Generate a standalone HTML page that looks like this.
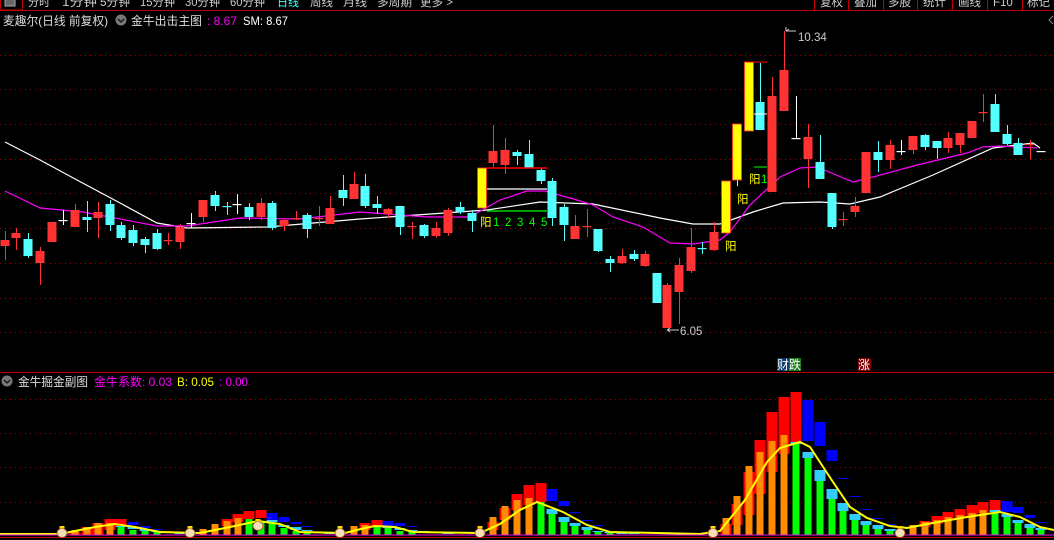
<!DOCTYPE html>
<html><head><meta charset="utf-8">
<style>
html,body{margin:0;padding:0;background:#000;width:1054px;height:540px;overflow:hidden;}
svg{display:block}
text{font-family:"Liberation Sans","Noto Sans CJK SC",sans-serif;}
</style></head>
<body>
<svg id="s" width="1054" height="540" viewBox="0 0 1054 540" xmlns="http://www.w3.org/2000/svg">
<rect width="1054" height="540" fill="#000"/>
<rect x="0" y="0" width="1054" height="10" fill="#000"/>
<line x1="0" y1="10.5" x2="1054" y2="10.5" stroke="#c00000" stroke-width="1"/>
<rect x="0.5" y="-2" width="22" height="12" fill="none" stroke="#c00000"/>
<rect x="5" y="-2" width="10" height="8" fill="#666" stroke="#aaa"/>
<g font-size="11.5" fill="#ccc">
<text x="28" y="6" textLength="22" lengthAdjust="spacingAndGlyphs">分时</text>
<text x="62" y="6" textLength="35" lengthAdjust="spacingAndGlyphs">1分钟</text>
<text x="100" y="6" textLength="30" lengthAdjust="spacingAndGlyphs">5分钟</text>
<text x="140" y="6" textLength="35" lengthAdjust="spacingAndGlyphs">15分钟</text>
<text x="185" y="6" textLength="35" lengthAdjust="spacingAndGlyphs">30分钟</text>
<text x="230" y="6" textLength="35" lengthAdjust="spacingAndGlyphs">60分钟</text>
<text x="277" y="6" fill="#4ff" textLength="22" lengthAdjust="spacingAndGlyphs">日线</text>
<text x="310" y="6" textLength="23" lengthAdjust="spacingAndGlyphs">周线</text>
<text x="343" y="6" textLength="24" lengthAdjust="spacingAndGlyphs">月线</text>
<text x="377" y="6" textLength="35" lengthAdjust="spacingAndGlyphs">多周期</text>
<text x="420" y="6" textLength="33" lengthAdjust="spacingAndGlyphs">更多 &gt;</text>
<text x="820" y="6">复权</text><text x="854" y="6">叠加</text><text x="888" y="6">多股</text><text x="923" y="6">统计</text><text x="958" y="6">画线</text><text x="993" y="6">F10</text><text x="1027" y="6">标记</text>
</g>
<g stroke="#c00000"><line x1="814.5" y1="0" x2="814.5" y2="10"/><line x1="848.5" y1="0" x2="848.5" y2="10"/><line x1="883.5" y1="0" x2="883.5" y2="10"/><line x1="917.5" y1="0" x2="917.5" y2="10"/><line x1="952.5" y1="0" x2="952.5" y2="10"/><line x1="987.5" y1="0" x2="987.5" y2="10"/><line x1="1022.5" y1="0" x2="1022.5" y2="10"/></g>
<g font-size="12">
<text x="3" y="25" fill="#ddd" textLength="105" lengthAdjust="spacingAndGlyphs">麦趣尔(日线 前复权)</text>
<circle cx="121" cy="20" r="5.5" fill="#777"/><path d="M118,19 l3,3 l3,-3" stroke="#111" fill="none" stroke-width="1.3"/>
<text x="131" y="25" fill="#ddd" textLength="71" lengthAdjust="spacingAndGlyphs">金牛出击主图</text>
<text x="207" y="25" fill="#f0f" textLength="30" lengthAdjust="spacingAndGlyphs">: 8.67</text>
<text x="243" y="25" fill="#fff" textLength="45" lengthAdjust="spacingAndGlyphs">SM: 8.67</text>
</g>
<path d="M1053,16 l-4,4 l4,4" stroke="#888" fill="none"/>
<g id="grid"></g>
<g id="ma"></g>
<g id="cand"></g>
<line x1="487" y1="168" x2="547" y2="168" stroke="#f00" stroke-width="1.5"/>
<line x1="487" y1="189" x2="547" y2="189" stroke="#fff" stroke-width="1.2"/>
<line x1="487" y1="211" x2="547" y2="211" stroke="#0f0" stroke-width="1.2"/>
<line x1="746" y1="62" x2="767" y2="62" stroke="#f00" stroke-width="1"/>
<line x1="754" y1="114" x2="767" y2="114" stroke="#fff" stroke-width="1"/>
<line x1="754" y1="167" x2="767" y2="167" stroke="#0f0" stroke-width="1"/>
<g font-size="11.5">
<text x="480" y="226" fill="#ff0">阳</text>
<text x="493" y="226" fill="#0f0">1</text><text x="505" y="226" fill="#0f0">2</text><text x="517" y="226" fill="#0f0">3</text><text x="529" y="226" fill="#0f0">4</text><text x="541" y="226" fill="#0f0">5</text>
<text x="749" y="183" fill="#ff0">阳</text><text x="761" y="183" fill="#0f0">1</text>
<text x="737" y="203" fill="#ff0">阳</text>
<text x="725" y="250" fill="#ff0">阳</text>
</g>
<g font-size="11.5" fill="#ccc">
<path d="M786,31 h10 M786,31 l3,-2 M786,31 l0,-4" stroke="#ccc" fill="none"/>
<text x="798" y="41">10.34</text>
<path d="M667,330 h12 M667,330 l3,-2 M667,330 l3,2" stroke="#ccc" fill="none"/>
<text x="680" y="335">6.05</text>
</g>
<line x1="0" y1="372.5" x2="1054" y2="372.5" stroke="#c00000"/>
<rect x="777" y="358" width="12" height="13" fill="#0a3a6a"/><rect x="789" y="358" width="12" height="13" fill="#1a7a1a"/>
<text x="777" y="369" font-size="12" fill="#fff">财跌</text>
<rect x="858" y="358" width="13" height="13" fill="#7a0000"/>
<text x="858" y="369" font-size="12" fill="#fff">涨</text>
<circle cx="7" cy="381" r="5.5" fill="#777"/><path d="M4,380 l3,3 l3,-3" stroke="#111" fill="none" stroke-width="1.3"/>
<g font-size="12">
<text x="18" y="386" fill="#ddd" textLength="70" lengthAdjust="spacingAndGlyphs">金牛掘金副图</text>
<text x="94" y="386" fill="#f0f" textLength="78" lengthAdjust="spacingAndGlyphs">金牛系数: 0.03</text>
<text x="177" y="386" fill="#ff0" textLength="37" lengthAdjust="spacingAndGlyphs">B: 0.05</text>
<text x="219" y="386" fill="#f0f" textLength="29" lengthAdjust="spacingAndGlyphs">: 0.00</text>
</g>
<g id="sub"></g>
<line x1="0" y1="535" x2="1054" y2="535" stroke="#e0e" stroke-width="1"/>
<line x1="0" y1="537.5" x2="1054" y2="537.5" stroke="#c00000" stroke-width="1"/>
<g id="bags"></g>
</svg>
<script>
var NS="http://www.w3.org/2000/svg";
function add(g,tag,a){var e=document.createElementNS(NS,tag);for(var k in a)e.setAttribute(k,a[k]);document.getElementById(g).appendChild(e);return e;}
[55,89,124,159,193,228,263,298,332,399,433,467,502].forEach(function(y){add('grid','line',{x1:0,x2:1054,y1:y+0.5,y2:y+0.5,stroke:'#a00000','stroke-dasharray':'1,4'});});
function pl(pts,c,w){add('ma','polyline',{points:pts.map(function(p){return p.join(',')}).join(' '),fill:'none',stroke:c,'stroke-width':w});}
pl([[5,142],[40,160],[77,180],[120,203],[157,223],[187,228],[267,227],[360,219],[487,210],[540,202],[593,204],[660,218],[693,224],[720,224],[753,212],[783,203],[820,202],[850,204],[880,197],[933,175],[993,148],[1033,143],[1040,148]],'#fff',1.2);
pl([[5,191],[40,208],[83,212],[157,226],[187,226],[240,218],[300,219],[360,212],[427,217],[470,217],[500,200],[527,191],[545,191],[577,200],[593,205],[613,217],[643,227],[670,243],[693,244],[720,240],[730,232],[750,205],[780,177],[800,168],[817,167],[853,182],[873,177],[917,165],[967,153],[983,147],[1000,146],[1037,148]],'#f0f',1.2);
var C=[[5,'r',240,246,231,260],[16,'r',233,238,228,250],[28,'c',239,256,233,258],[40,'r',251,263,247,285],[52,'r',222,242,222,242],[63,'w',220,220,210,225],[75,'r',210,227,204,227],[87,'c',217,220,201,232],[98,'r',212,218,202,238],[110,'c',204,225,200,231],[121,'c',225,238,222,240],[133,'c',230,243,225,246],[145,'c',239,245,237,253],[157,'c',233,249,229,250],[168,'r',240,241,233,245],[180,'r',227,242,224,249],[191,'w',223,223,213,228],[203,'r',200,217,200,222],[215,'c',195,206,191,211],[227,'c',206,206,202,215],[237,'w',204,204,194,214],[249,'c',207,217,203,220],[261,'r',203,217,198,220],[272,'c',203,228,201,230],[284,'r',220,226,219,231],[296,'r',218,219,211,220],[307,'c',215,229,213,238],[319,'r',218,219,206,226],[330,'r',208,224,196,224],[343,'c',190,198,175,206],[354,'r',184,199,172,199],[365,'c',186,206,174,208],[377,'c',204,208,196,214],[388,'r',209,214,208,218],[400,'c',206,227,206,235],[412,'r',226,227,222,239],[424,'c',225,236,224,238],[436,'r',228,236,222,238],[448,'r',210,233,208,236],[460,'c',207,212,202,214],[472,'c',213,221,210,232],[482,'y',168,208,168,208],[493,'r',151,163,125,167],[505,'r',150,165,138,174],[517,'c',152,156,150,165],[529,'c',154,168,140,168],[541,'c',170,181,168,184],[552,'c',181,218,178,226],[564,'c',207,225,204,241],[575,'r',226,239,215,239],[587,'r',226,227,209,237],[598,'c',229,251,229,252],[610,'c',259,263,256,272],[622,'r',256,263,249,264],[634,'c',254,259,250,261],[645,'r',254,266,251,267],[657,'c',273,303,273,303],[667,'r',285,328,283,328],[679,'r',265,292,258,324],[691,'r',247,271,228,273],[702,'c',248,248,242,254],[714,'r',232,250,222,251],[726,'y',181,233,181,233],[737,'y',124,180,124,186],[749,'y',62,131,62,131],[760,'c',102,130,63,130],[772,'r',96,192,77,192],[784,'r',70,111,31,111],[796,'w',138,138,96,138],[808,'r',137,159,124,188],[820,'c',162,179,135,179],[832,'c',193,227,193,229],[843,'r',219,220,212,226],[855,'r',206,212,197,217],[866,'r',152,193,152,193],[878,'c',152,160,141,172],[890,'r',145,160,140,169],[901,'w',151,151,140,155],[913,'r',136,150,136,154],[925,'c',135,147,134,150],[937,'c',141,148,141,159],[948,'r',138,148,132,153],[960,'r',133,145,133,153],[972,'r',121,138,121,138],[983,'r',112,113,94,122],[995,'c',104,132,94,132],[1007,'c',134,144,125,145],[1018,'c',143,155,138,155],[1030,'r',144,145,140,159],[1041,'w',151,151,151,151]];
var col={r:'#ff3333',c:'#54ffff',w:'#ffffff',y:'#ffff00'};
C.forEach(function(d){var x=d[0],c=col[d[1]];
 if(d[5]>d[4])add('cand','line',{x1:x+0.5,x2:x+0.5,y1:d[4],y2:d[5],stroke:c,'stroke-width':1});
 var h=Math.max(d[3]-d[2],1.2);
 add('cand','rect',{x:x-4.5,y:d[2],width:9,height:h,fill:c});
 if(d[1]=='y')add('cand','rect',{x:x-4.5,y:d[2],width:9,height:h,fill:'none',stroke:'#f33','stroke-width':0.8});
});
var B=[{x:75,r:[532,535],o:530},{x:87,r:[527,535],o:527},{x:98,r:[523,535],o:523},{x:110,r:[519,530],o:523},{x:121,r:[519,526],c:[526,527],g:527},{x:133,bl:[522,525],c:[527,529],g:530},{x:145,bl:[526,528],c:[529,531],g:531},{x:157,bl:[529,530],c:[531,532],g:532},{x:168,c:[532,533]},{x:180,c:[533,534]},
{x:203,o:529},{x:215,o:524},{x:227,r:[519,526],o:521},{x:238,r:[514,522],o:518},{x:249,r:[511,519],g:519},{x:261,r:[510,518],g:522},{x:272,bl:[513,520],c:[520,522],g:523},{x:284,bl:[517,522],c:[525,527],g:528},{x:296,bl:[522,524],c:[527,530],g:531},{x:307,bl:[526,527],c:[530,531],g:532},{x:319,c:[532,533]},{x:330,c:[533,534]},
{x:354,o:526},{x:365,r:[523,530],o:525},{x:377,r:[520,526],g:526},{x:388,bl:[521,526],c:[526,528],g:528},{x:400,bl:[523,526],c:[528,530],g:531},{x:412,bl:[526,527],c:[530,531],g:531},{x:424,c:[531,532]},{x:436,c:[532,533]},{x:448,c:[533,534]},
{x:493,r:[522,530],o:517},{x:505,r:[508,520],o:506},{x:517,r:[494,510],o:500},{x:529,r:[485,505],o:498},{x:541,r:[483,502],g:502},{x:552,bl:[489,501],c:[509,514],g:514},{x:564,bl:[501,506],c:[517,522],g:522},{x:575,bl:[512,513],c:[523,526],g:526},{x:587,bl:[520,521],c:[527,530],g:530},{x:598,bl:[525,526],c:[531,532],g:532},{x:610,c:[532,533],g:533},{x:622,c:[533,534]},{x:634,c:[533,534]},
{x:726,r:[524,535],o:518},{x:737,r:[504,525],o:496},{x:749,r:[472,515],o:466},{x:760,r:[440,494],o:452},{x:772,r:[412,472],o:441},{x:784,r:[397,454],o:435},{x:796,r:[392,443],c:[442,444],g:444},{x:808,bl:[400,441],c:[452,458],g:458},{x:820,bl:[422,446],c:[470,481],g:481},{x:832,bl:[450,461],c:[489,499],g:499},{x:843,bl:[478,479],c:[503,511],g:511},{x:855,bl:[496,497],c:[514,520],g:520},{x:866,bl:[509,510],c:[521,525],g:525},{x:878,bl:[518,519],c:[525,529],g:529},{x:890,bl:[524,525],c:[529,531],g:531},
{x:913,o:525},{x:925,r:[521,527],o:522},{x:937,r:[516,524],o:520},{x:948,r:[512,520],o:517},{x:960,r:[509,518],o:515},{x:972,r:[505,516],o:513},{x:983,r:[502,513],o:510},{x:995,r:[500,511],c:[510,512],g:511},{x:1007,bl:[501,512],c:[514,517],g:517},{x:1018,bl:[507,513],c:[520,523],g:523},{x:1030,bl:[515,518],c:[524,528],g:528},{x:1041,bl:[522,523],c:[528,530],g:530}];
B.forEach(function(b){var x=b.x;
 if(b.r)add('sub','rect',{x:x-5.5,y:b.r[0],width:11,height:b.r[1]-b.r[0],fill:'#ff0000'});
 if(b.bl)add('sub','rect',{x:x-5.5,y:b.bl[0],width:11,height:Math.max(b.bl[1]-b.bl[0],1),fill:'#0000ff'});
 if(b.o)add('sub','rect',{x:x-3.5,y:b.o,width:7,height:535-b.o,fill:'#ff8c00'});
 if(b.g)add('sub','rect',{x:x-3.5,y:b.g,width:7,height:535-b.g,fill:'#00ff00'});
 if(b.c)add('sub','rect',{x:x-5.5,y:b.c[0],width:11,height:Math.max(b.c[1]-b.c[0],1),fill:'#33ccff'});
});
add('sub','polyline',{points:[[0,534],[60,534],[75,531],[95,527],[115,524],[135,527],[160,532],[200,533],[230,527],[258,521],[280,524],[300,532],[345,533],[365,528],[375,526],[395,527],[413,532],[480,533],[500,524],[520,510],[537,502],[563,512],[587,525],[610,532],[700,534],[720,531],[745,500],[767,462],[780,448],[800,442],[810,447],[833,482],[850,507],[867,518],[890,526],[907,528],[933,523],[967,517],[1000,512],[1020,517],[1040,527],[1054,530]].map(function(p){return p.join(',')}).join(' '),fill:'none',stroke:'#ffff00','stroke-width':2});
[[62,533],[190,533],[258,526],[340,533],[480,533],[713,533],[900,533]].forEach(function(p){
 add('bags','ellipse',{cx:p[0],cy:p[1],rx:5,ry:4.5,fill:'#f5deb3',stroke:'#a0522d','stroke-width':0.8});
 add('bags','rect',{x:p[0]-2.5,y:p[1]-7,width:5,height:2.5,fill:'#ffd700'});
});
</script>
</body></html>
